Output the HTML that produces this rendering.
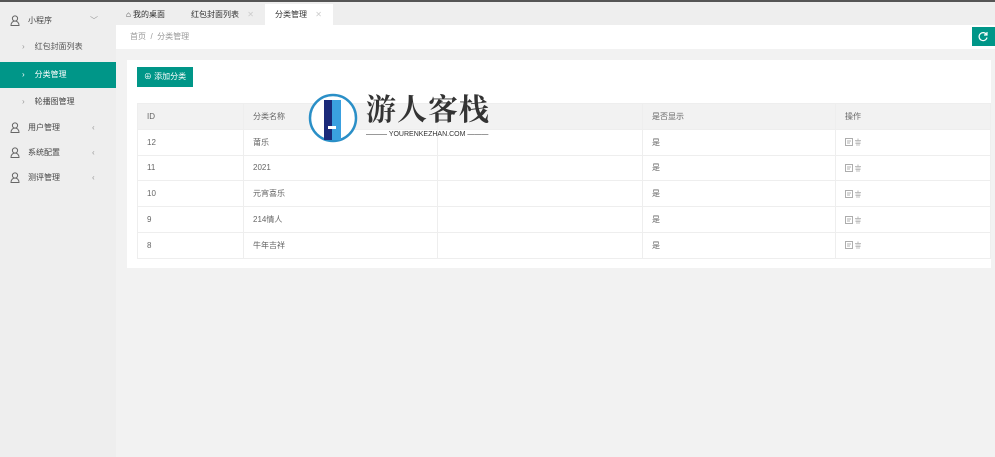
<!DOCTYPE html><html><head><meta charset="utf-8"><style>
*{margin:0;padding:0;box-sizing:border-box}
body{width:995px;height:457px;overflow:hidden;background:#f2f2f2;font-family:"Liberation Sans","Noto Sans CJK SC",sans-serif;font-size:8px;color:#555;position:relative}
.a{position:absolute}
.side{left:0;top:0;width:116px;height:457px;background:#eeeeee;border-top:2px solid #555}
.si{position:absolute;left:0;width:116px;height:26px;line-height:26px;color:#444}
.top{left:116px;top:0;right:0;height:25px;background:#eeeeee;border-top:2px solid #555}
.tab{position:absolute;top:2px;height:23px;line-height:21px;color:#333}
.bc{left:116px;top:25px;right:0;height:24px;background:#fff;color:#999;line-height:24px;padding-left:14px}
.card{left:127px;top:60px;width:864px;height:208px;background:#fff}
table{position:absolute;left:137px;top:103px;width:854px;border-collapse:collapse}
td{border:1px solid #eee;height:25.8px;padding-left:9px;color:#666}
tr:first-child td{background:#f2f2f2}
.ic{display:inline-block;vertical-align:middle}
</style></head><body>
<svg width="0" height="0" style="position:absolute"><defs>
<g id="u"><circle cx="5" cy="3.5" r="2.6" fill="none" stroke="#666" stroke-width="1"/><path d="M1 10.5c0-3 2-4.5 4-4.5s4 1.5 4 4.5z" fill="none" stroke="#666" stroke-width="1"/></g>
<g id="ops"><rect x="0.5" y="1.5" width="7" height="7" fill="none" stroke="#999" stroke-width="0.8"/><path d="M2 4h4M2 6h3" stroke="#999" stroke-width="0.7"/><path d="M13 1.5v2M10 3.5h6M10.5 5h5M10.5 6.5h5M11 8h4" stroke="#aaa" stroke-width="0.8"/></g>
</defs></svg>
<div class="a side">
<div class="si" style="top:6px"><svg class="ic" style="margin-left:10px" width="10" height="11"><use href="#u"/></svg><span style="margin-left:8px">小程序</span><span style="position:absolute;left:90px;color:#999">﹀</span></div>
<div class="si" style="top:32px;color:#555"><span style="margin-left:22px;color:#999">›</span><span style="margin-left:10px">红包封面列表</span></div>
<div class="si" style="top:60px;background:#009688;color:#fff"><span style="margin-left:22px">›</span><span style="margin-left:10px">分类管理</span></div>
<div class="si" style="top:87px"><span style="margin-left:22px;color:#999">›</span><span style="margin-left:10px">轮播图管理</span></div>
<div class="si" style="top:113px"><svg class="ic" style="margin-left:10px" width="10" height="11"><use href="#u"/></svg><span style="margin-left:8px">用户管理</span><span style="position:absolute;left:92px;color:#999">‹</span></div>
<div class="si" style="top:138px"><svg class="ic" style="margin-left:10px" width="10" height="11"><use href="#u"/></svg><span style="margin-left:8px">系统配置</span><span style="position:absolute;left:92px;color:#999">‹</span></div>
<div class="si" style="top:163px"><svg class="ic" style="margin-left:10px" width="10" height="11"><use href="#u"/></svg><span style="margin-left:8px">测评管理</span><span style="position:absolute;left:92px;color:#999">‹</span></div>
</div>
<div class="a top">
<div class="tab" style="left:10px">⌂ 我的桌面</div>
<div class="tab" style="left:75px">红包封面列表 <span style="color:#ccc;margin-left:6px">✕</span></div>
<div class="tab" style="left:149px;width:68px;background:#fff;padding-left:10px">分类管理 <span style="color:#ccc;margin-left:6px">✕</span></div>
</div>
<div class="a bc">首页 &nbsp;/&nbsp; 分类管理</div>
<div class="a" style="left:972px;top:27px;width:23px;height:19px;background:#009688"><svg width="23" height="19"><path d="M14.5 7.5a4 4 0 1 0 0.5 3" fill="none" stroke="#fff" stroke-width="1.2"/><path d="M15 5v3h-3" fill="none" stroke="#fff" stroke-width="1.2"/></svg></div>
<div class="a card"></div>
<div class="a" style="left:137px;top:67px;width:56px;height:20px;background:#009688;color:#fff;line-height:20px;text-align:center">⊕ 添加分类</div>
<table>
<tr><td style="width:106px">ID</td><td style="width:194px">分类名称</td><td style="width:205px"></td><td style="width:193px">是否显示</td><td>操作</td></tr>
<tr><td>12</td><td>莆乐</td><td></td><td>是</td><td><svg class="ic" width="18" height="10"><use href="#ops"/></svg></td></tr>
<tr><td>11</td><td>2021</td><td></td><td>是</td><td><svg class="ic" width="18" height="10"><use href="#ops"/></svg></td></tr>
<tr><td>10</td><td>元宵喜乐</td><td></td><td>是</td><td><svg class="ic" width="18" height="10"><use href="#ops"/></svg></td></tr>
<tr><td>9</td><td>214情人</td><td></td><td>是</td><td><svg class="ic" width="18" height="10"><use href="#ops"/></svg></td></tr>
<tr><td>8</td><td>牛年吉祥</td><td></td><td>是</td><td><svg class="ic" width="18" height="10"><use href="#ops"/></svg></td></tr>
</table>
<svg class="a" style="left:306px;top:92px" width="56" height="52"><circle cx="27" cy="26" r="23" fill="#fff" stroke="#2a8fc7" stroke-width="2.5"/><rect x="18" y="8" width="8" height="40" fill="#1b2a7a"/><rect x="26" y="8" width="9" height="40" fill="#3aa0e0"/><rect x="22" y="34" width="8" height="3" fill="#fff"/></svg>
<div class="a" style="left:366px;top:89px;font-family:'Noto Serif CJK SC',serif;font-size:30px;font-weight:bold;color:#333;line-height:36px;letter-spacing:1px">游人客栈</div>
<div class="a" style="left:366px;top:131px;font-size:7px;color:#333;white-space:nowrap">——— YOURENKEZHAN.COM ———</div>
</body></html>
